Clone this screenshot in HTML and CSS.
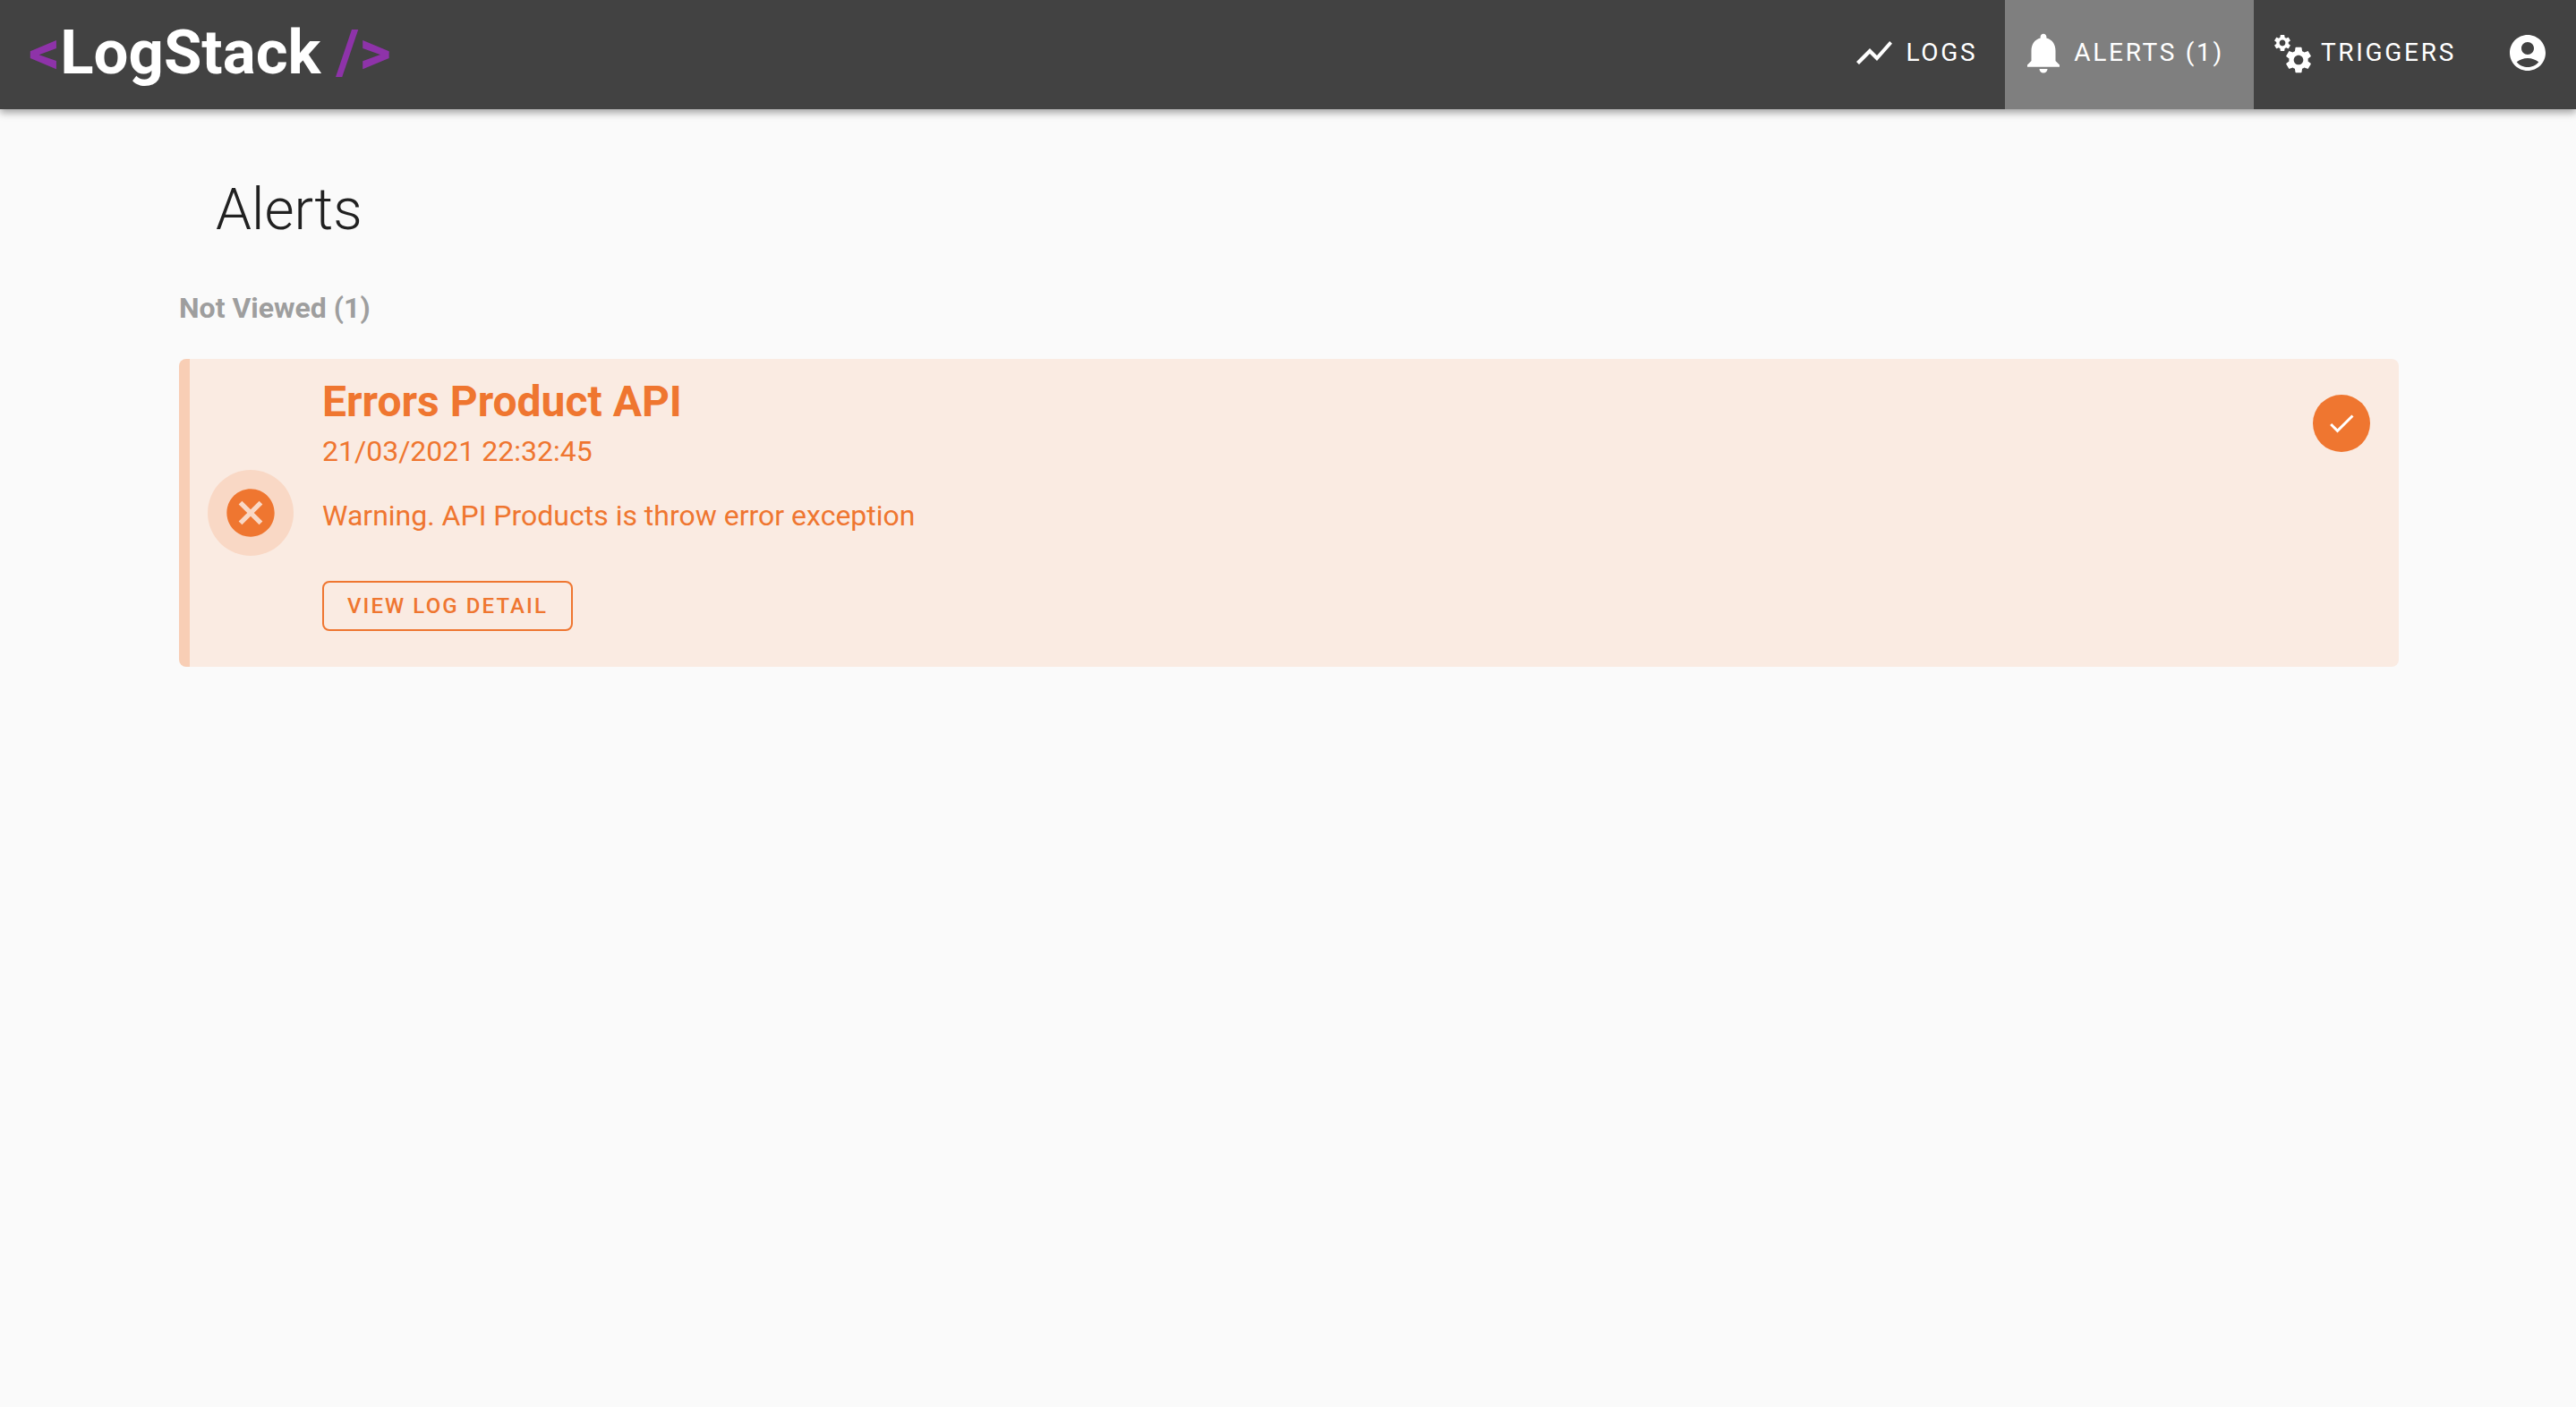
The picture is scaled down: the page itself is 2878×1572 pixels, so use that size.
FILE: index.html
```html
<!DOCTYPE html>
<html lang="en">
<head>
<meta charset="utf-8">
<title>LogStack</title>
<link rel="stylesheet" href="styles.css">
</head>
<body>
<header class="topbar">
  <div class="logo"><span class="logo-accent">&lt;</span>LogStack <span class="logo-accent">/&gt;</span></div>
  <nav class="nav">
    <a class="tab tab-logs">
      <svg class="icon" viewBox="0 0 24 24"><path d="M3.5 18.49l6-6.01 4 4L22 6.92l-1.41-1.41-7.09 7.97-4-4L2 16.99z"/></svg>
      <span>LOGS</span>
    </a>
    <a class="tab tab-active">
      <svg class="icon icon-bell" viewBox="0 0 24 24"><path d="M12 22c1.1 0 2-.9 2-2h-4c0 1.1.89 2 2 2zm6-6v-5c0-3.07-1.64-5.64-4.5-6.32V4c0-.83-.67-1.5-1.5-1.5s-1.5.67-1.5 1.5v.68C7.63 5.36 6 7.92 6 11v5l-2 2v1h16v-1l-2-2z"/></svg>
      <span>ALERTS (1)</span>
    </a>
    <a class="tab tab-triggers">
      <svg class="icon" viewBox="0 0 24 24">
        <defs><path id="gear" d="M19.14 12.94c.04-.3.06-.61.06-.94 0-.32-.02-.64-.07-.94l2.03-1.58c.18-.14.23-.41.12-.61l-1.92-3.32c-.12-.22-.37-.29-.59-.22l-2.39.96c-.5-.38-1.03-.7-1.62-.94l-.36-2.54c-.04-.24-.24-.41-.48-.41h-3.84c-.24 0-.43.17-.47.41l-.36 2.54c-.59.24-1.13.57-1.62.94l-2.39-.96c-.22-.08-.47 0-.59.22L2.74 8.87c-.12.21-.08.47.12.61l2.03 1.58c-.05.3-.09.63-.09.94s.02.64.07.94l-2.03 1.58c-.18.14-.23.41-.12.61l1.92 3.32c.12.22.37.29.59.22l2.39-.96c.5.38 1.03.7 1.62.94l.36 2.54c.05.24.24.41.48.41h3.84c.24 0 .44-.17.47-.41l.36-2.54c.59-.24 1.13-.56 1.62-.94l2.39.96c.22.08.47 0 .59-.22l1.92-3.32c.12-.22.07-.47-.12-.61l-2.01-1.58zM12 15.6c-1.98 0-3.6-1.62-3.6-3.6s1.62-3.6 3.6-3.6 3.6 1.62 3.6 3.6-1.62 3.6-3.6 3.6z"/></defs>
        <use href="#gear" transform="translate(6.5 6.5) scale(.47) translate(-12 -12)"/>
        <use href="#gear" transform="translate(15.5 16) scale(.74) translate(-12 -12)"/>
      </svg>
      <span>TRIGGERS</span>
    </a>
    <a class="avatar">
      <svg class="icon" viewBox="0 0 24 24"><path d="M12 2C6.48 2 2 6.48 2 12s4.48 10 10 10 10-4.48 10-10S17.52 2 12 2zm0 4c1.93 0 3.5 1.57 3.5 3.5S13.93 13 12 13s-3.5-1.57-3.5-3.5S10.07 6 12 6zm0 14c-2.03 0-4.43-.82-6.14-2.88C7.55 15.8 9.68 15 12 15s4.45.8 6.14 2.12C16.43 19.18 14.03 20 12 20z"/></svg>
    </a>
  </nav>
</header>
<main class="page">
  <h1 class="page-title">Alerts</h1>
  <h2 class="section-title">Not Viewed (1)</h2>
  <article class="alert">
    <div class="alert-icon">
      <svg class="cancel" viewBox="0 0 24 24"><path d="M12 2C6.47 2 2 6.47 2 12s4.47 10 10 10 10-4.47 10-10S17.53 2 12 2zm5 13.59L15.59 17 12 13.41 8.41 17 7 15.59 10.59 12 7 8.41 8.41 7 12 10.59 15.59 7 17 8.41 13.41 12 17 15.59z"/></svg>
    </div>
    <div class="alert-body">
      <h3 class="alert-title">Errors Product API</h3>
      <div class="alert-date">21/03/2021 22:32:45</div>
      <p class="alert-message">Warning. API Products is throw error exception</p>
      <button class="outline-btn">VIEW LOG DETAIL</button>
    </div>
    <button class="check-btn">
      <svg class="check" viewBox="0 0 24 24"><path d="M9 16.2L4.8 12l-1.4 1.4L9 19 21 7l-1.4-1.4L9 16.2z"/></svg>
    </button>
  </article>
</main>
</body>
</html>
```
FILE: styles.css
```css
* { box-sizing: border-box; }
html, body { margin: 0; height: 100%; }
body {
  background: #fafafa;
  font-family: Roboto, "Liberation Sans", sans-serif;
  color: #212121;
}
.topbar {
  height: 122px;
  background: #424242;
  display: flex;
  align-items: center;
  justify-content: space-between;
  padding: 0 30px 0 32px;
  box-shadow: 0 4px 8px rgba(0, 0, 0, .35);
}
.logo {
  font-size: 69px;
  font-weight: 700;
  color: #fff;
  line-height: 1;
  margin-top: -5px;
}
.logo-accent { color: #8e33a9; }
.nav { display: flex; align-items: stretch; height: 122px; }
.tab {
  display: flex;
  align-items: center;
  gap: 8px;
  padding: 0 33px 5px 17px;
  color: #fff;
  font-size: 28px;
  font-weight: 400;
  letter-spacing: 2.7px;
}
.tab-logs { gap: 11px; padding-right: 31px; }
.tab-active { background: #7f7f7f; gap: 7px; padding-left: 16px; }
.tab-triggers { padding-left: 19px; padding-right: 32px; }
.icon { width: 48px; height: 48px; fill: #fff; flex: none; }
.icon-bell { width: 54px; height: 54px; }
.avatar { display: flex; align-items: center; margin-left: 24px; padding-bottom: 4px; }
.page { padding: 0 198px 0 200px; }
.page-title {
  margin: 0 0 0 41px;
  padding-top: 75px;
  font-size: 64px;
  font-weight: 300;
  line-height: 76px;
}
.section-title {
  margin: 0;
  padding-top: 51px;
  font-size: 32px;
  font-weight: 700;
  line-height: 40px;
  color: #9e9e9e;
}
.alert {
  margin-top: 37px;
  height: 344px;
  display: flex;
  background: #faebe2;
  border-left: 12px solid #f8ceb5;
  border-radius: 8px;
  color: #ef7630;
}
.alert-icon {
  flex: none;
  width: 96px;
  height: 96px;
  margin: 124px 32px 0 20px;
  border-radius: 50%;
  background: #f9d8c5;
  display: flex;
  align-items: center;
  justify-content: center;
}
.cancel { width: 64px; height: 64px; fill: #ef7630; }
.alert-body { flex: 1; padding-top: 21px; }
.alert-title { margin: 0; font-size: 48px; font-weight: 700; line-height: 54px; }
.alert-date { margin-top: 8px; font-size: 32px; line-height: 40px; }
.alert-message { margin: 32px 0 0; font-size: 32px; line-height: 40px; }
.outline-btn {
  display: block;
  margin-top: 53px;
  width: 280px;
  height: 56px;
  padding: 0;
  background: transparent;
  border: 2px solid #ef7630;
  border-radius: 8px;
  color: #ef7630;
  font-family: inherit;
  font-size: 24px;
  font-weight: 500;
  letter-spacing: 2.1px;
}
.check-btn {
  flex: none;
  width: 64px;
  height: 64px;
  margin: 40px 32px 0 0;
  padding: 0;
  border: 0;
  border-radius: 50%;
  background: #ef7630;
  display: flex;
  align-items: center;
  justify-content: center;
}
.check { width: 36px; height: 36px; fill: #fff; }
```
